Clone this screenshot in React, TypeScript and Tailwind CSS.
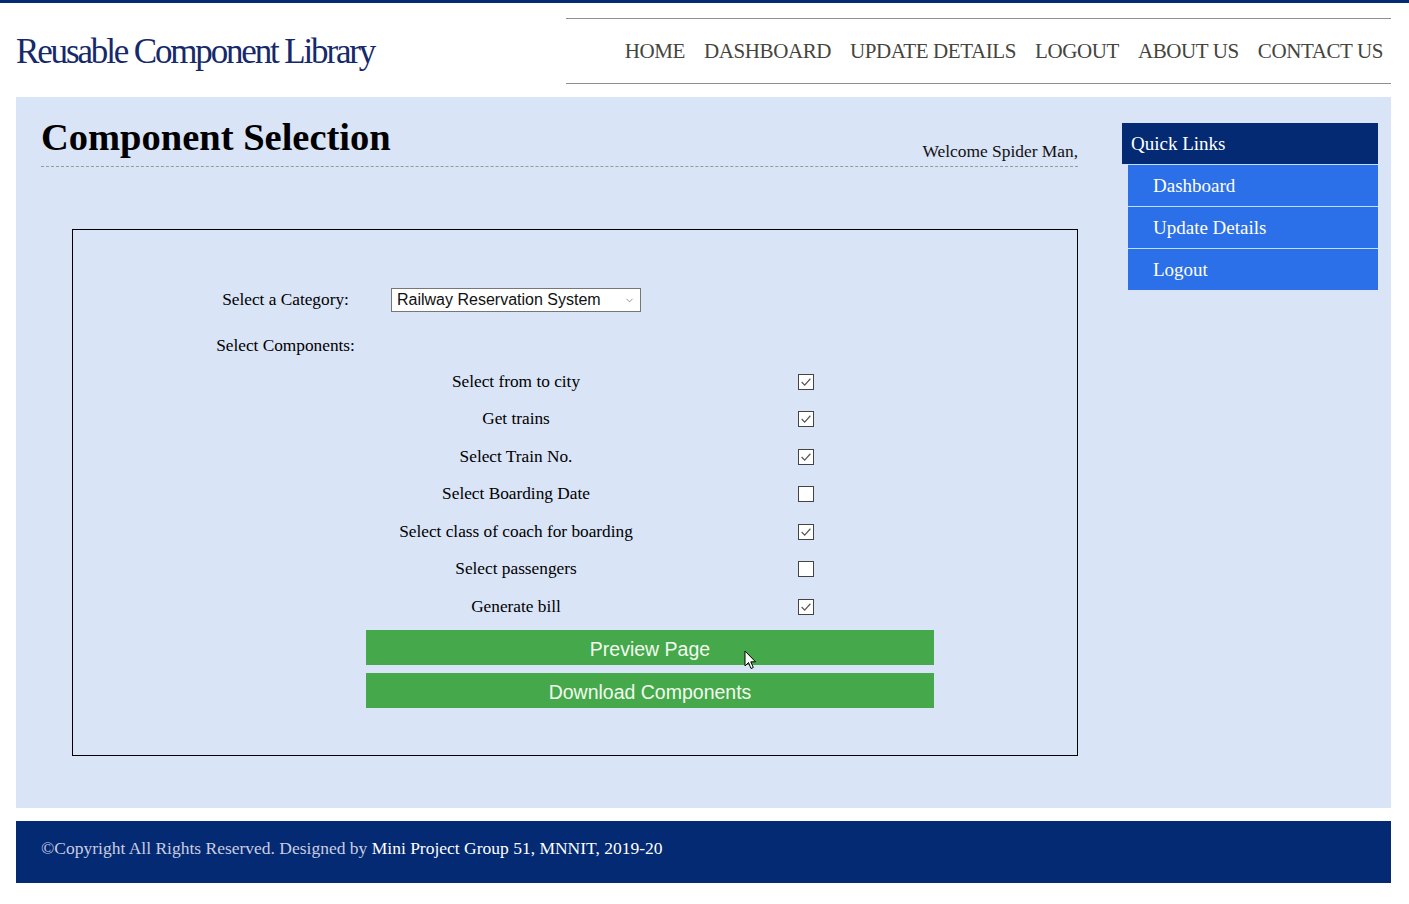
import { ChevronDown } from 'lucide-react'

const components: [string, boolean][] = [
  ['Select from to city', true],
  ['Get trains', true],
  ['Select Train No.', true],
  ['Select Boarding Date', false],
  ['Select class of coach for boarding', true],
  ['Select passengers', false],
  ['Generate bill', true],
]

const navItems = ['HOME', 'DASHBOARD', 'UPDATE DETAILS', 'LOGOUT', 'ABOUT US', 'CONTACT US']
const quickLinks = ['Dashboard', 'Update Details', 'Logout']

function CheckBox({ checked }: { checked: boolean }) {
  return (
    <span className="flex h-[16px] w-[16px] items-center justify-center border border-[#444] bg-white">
      {checked && (
        <svg width="12" height="12" viewBox="0 0 11 11" fill="none">
          <path d="M1.5 5.5 L4.3 8.3 L9.5 2.5" stroke="#555" strokeWidth="1.1" />
        </svg>
      )}
    </span>
  )
}

export default function App() {
  return (
    <div className="min-h-screen bg-white font-['Liberation_Serif','Times_New_Roman',serif] text-black">
      <div className="h-[3px] bg-[#032a72]" />

      {/* Header */}
      <header className="flex h-[94px] items-start justify-between pl-[16px] pr-[18px]">
        <h1 className="mt-[29px] text-[35px] leading-[40px] tracking-[-2.15px] text-[#16296a]">
          Reusable Component Library
        </h1>
        <nav className="mt-[15px] flex h-[66px] w-[825px] items-center justify-end gap-[19px] border-y border-[#8f8f8f] pr-[8px] pt-[2px]">
          {navItems.map((item) => (
            <a key={item} className="text-[21px] tracking-[-0.4px] text-[#45443d]">
              {item}
            </a>
          ))}
        </nav>
      </header>

      {/* Main */}
      <main className="ml-[16px] mr-[18px] flex bg-[#d9e4f6] pl-[25px] pr-[13px] pt-[21px] pb-[52px]">
        <div className="w-[1037px]">
          <div className="flex items-end justify-between border-b border-dashed border-[#999]">
            <h2 className="mb-[10px] text-[38.5px] font-bold leading-[38px]">Component Selection</h2>
            <span className="mb-[5px] text-[17.4px] leading-[20px] text-[#111]">Welcome Spider Man,</span>
          </div>

          <div className="ml-[31px] mt-[62px] h-[527px] w-[1006px] border border-black text-[17.3px]">
            <div className="mt-[58px] flex h-[24px] items-center">
              <span className="ml-[127px] w-[171px] text-center">Select a Category:</span>
              <div className="relative ml-[20px] flex h-[24px] w-[250px] items-center border border-[#767676] bg-white pl-[5px] font-['Liberation_Sans',Arial,sans-serif] text-[16px] text-[#111]">
                Railway Reservation System
                <ChevronDown className="absolute right-[5px] top-[6px] h-[11px] w-[11px] text-[#666]" strokeWidth={1.5} />
              </div>
            </div>

            <div className="mt-[24px] flex h-[20px] items-center">
              <span className="ml-[127px] w-[171px] text-center">Select Components:</span>
            </div>

            <div className="mt-[7px]">
              {components.map(([label, checked]) => (
                <div key={label} className="flex h-[37.5px] items-center">
                  <span className="ml-[318px] w-[250px] text-center">{label}</span>
                  <span className="flex w-[330px] justify-center">
                    <CheckBox checked={checked} />
                  </span>
                </div>
              ))}
            </div>

            <div className="ml-[293px] mt-[4px] flex w-[568px] flex-col gap-[8px] font-['Liberation_Sans',Arial,sans-serif] text-[19.5px] text-[#f2fbef]">
              <button className="relative h-[35px] bg-[#45a84a] pt-[5px]">
                Preview Page
                <svg className="absolute left-[378px] top-[20px]" width="13" height="20" viewBox="0 0 13 20">
                  <path d="M1 1 L1 16 L4.5 12.5 L7 18.5 L9.3 17.5 L6.8 11.8 L11.5 11.8 Z" fill="#fff" stroke="#000" strokeWidth="1" />
                </svg>
              </button>
              <button className="h-[35px] bg-[#45a84a] pt-[5px]">Download Components</button>
            </div>
          </div>
        </div>

        {/* Quick links */}
        <aside className="ml-auto mt-[5px] w-[256px]">
          <div className="flex h-[41px] items-center bg-[#032a72] pl-[9px] pt-[2px] text-[19px] text-white">Quick Links</div>
          <ul className="ml-[6px]">
            {quickLinks.map((link) => (
              <li
                key={link}
                className="flex h-[42px] items-center border-t border-[#bfe0ff] bg-[#2b6fe9] pl-[25px] pt-[2px] text-[19px] text-white"
              >
                {link}
              </li>
            ))}
          </ul>
        </aside>
      </main>

      {/* Footer */}
      <footer className="ml-[16px] mr-[18px] mt-[13px] flex h-[62px] items-center bg-[#032a72] pl-[25px] text-[17.5px] text-[#c9cde2]">
        <span className="-mt-[8px]">
          ©Copyright All Rights Reserved. Designed by <span className="text-white">Mini Project Group 51, MNNIT, 2019-20</span>
        </span>
      </footer>
    </div>
  )
}
